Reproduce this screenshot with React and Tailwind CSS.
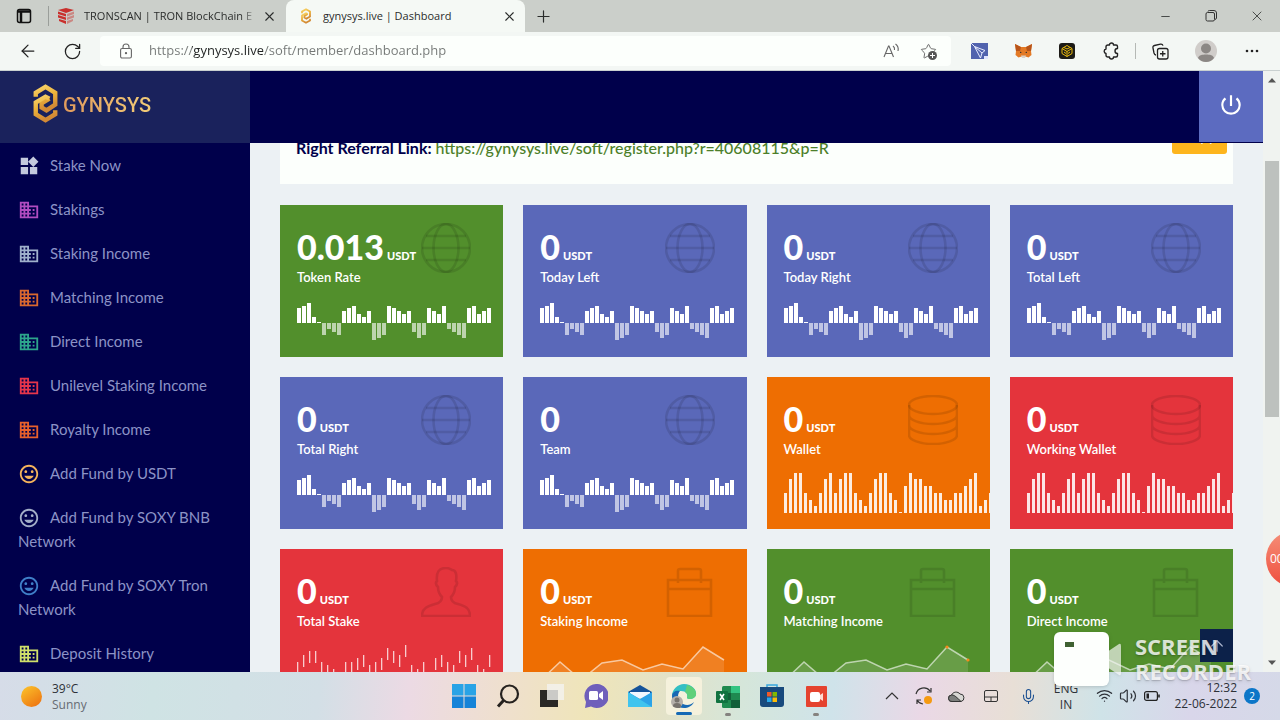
import {
  MdWidgets,
  MdDomain,
  MdMood,
  MdPowerSettingsNew,
} from "react-icons/md";
import {
  ArrowLeft,
  RotateCw,
  X,
  Plus,
  Minus,
  ArrowUp,
  Wifi,
  Volume2,
  Mic,
  Star,
} from "lucide-react";

// DATA
const menu = [
  { label: "Stake Now", icon: MdWidgets, color: "text-[#c3c9dd]" },
  { label: "Stakings", icon: MdDomain, color: "text-[#b14cc0]" },
  { label: "Staking Income", icon: MdDomain, color: "text-[#9fb0cc]" },
  { label: "Matching Income", icon: MdDomain, color: "text-[#d9682f]" },
  { label: "Direct Income", icon: MdDomain, color: "text-[#2da58c]" },
  { label: "Unilevel Staking Income", icon: MdDomain, color: "text-[#e5354b]" },
  { label: "Royalty Income", icon: MdDomain, color: "text-[#e8602c]" },
  { label: "Add Fund by USDT", icon: MdMood, color: "text-[#f5b35c]" },
  { label: "Add Fund by SOXY BNB Network", icon: MdMood, color: "text-[#a3aec8]" },
  { label: "Add Fund by SOXY Tron Network", icon: MdMood, color: "text-[#3f7fc8]" },
  { label: "Deposit History", icon: MdDomain, color: "text-[#cfe06a]" },
];

const cards = [
  { label: "Token Rate", value: "0.013", color: "bg-[#528f2c]", icon: "globe", chart: "wave" },
  { label: "Today Left", value: "0", color: "bg-[#5a68b9]", icon: "globe", chart: "wave" },
  { label: "Today Right", value: "0", color: "bg-[#5a68b9]", icon: "globe", chart: "wave" },
  { label: "Total Left", value: "0", color: "bg-[#5a68b9]", icon: "globe", chart: "wave" },
  { label: "Total Right", value: "0", color: "bg-[#5a68b9]", icon: "globe", chart: "wave" },
  { label: "Team", value: "0", noUnit: true, color: "bg-[#5a68b9]", icon: "globe", chart: "wave" },
  { label: "Wallet", value: "0", color: "bg-[#ee6e02]", icon: "coins", chart: "bars" },
  { label: "Working Wallet", value: "0", color: "bg-[#e4343c]", icon: "coins", chart: "bars" },
  { label: "Total Stake", value: "0", color: "bg-[#e4343c]", icon: "user", chart: "ticks" },
  { label: "Staking Income", value: "0", color: "bg-[#ee6e02]", icon: "bag", chart: "line" },
  { label: "Matching Income", value: "0", color: "bg-[#528f2c]", icon: "bag", chart: "line", dots: true },
  { label: "Direct Income", value: "0", color: "bg-[#528f2c]", icon: "bag", chart: "line" },
];

const waveData = [
  5, 6, 7, 2, 0, -4, -2, -3, -4, 4, 5, 6, 3, 2, 4, -6, -5, -4, 6, 5, 4, 3, 4,
  -3, -5, -4, 5, 4, 3, 6, -2, -3, -4, -5, 5, 6, 3, 4, 5,
];

const barData = [
  3, 5, 6, 6, 3, 2, 1, 3, 5, 6, 3, 5, 6, 6, 3, 2, 1, 3, 5, 6, 6, 3, 2, 0, 4, 6,
  5, 5, 4, 4, 3, 3, 2, 2, 3, 3, 4, 5, 6, 1, 2, 3,
];

const tickData = [
  18, 11, 7, 7, 18, 21, 25, 31, 18, 18, 14, 11, 21, 18, 14, 4, 7, 11, 1, 21, 25,
  18, 31, 14, 11, 18, 21, 7, 11, 4, 21, 25, 11,
];

// CARD CHARTS
function WaveChart() {
  return (
    <svg width="195" height="40" className="block">
      {waveData.map((v, i) => {
        const h = Math.max(1, Math.round(Math.abs(v) * 2.9));
        return (
          <rect
            key={i}
            x={i * 5}
            y={v < 0 ? 23 : 23 - h}
            width="4"
            height={h}
            fill="#fff"
            opacity={v < 0 ? 0.62 : 1}
          />
        );
      })}
    </svg>
  );
}

function BarChart() {
  return (
    <svg width="210" height="41" className="block">
      {barData.map((v, i) => {
        const h = Math.max(1, Math.round(v * 6.7));
        return (
          <rect
            key={i}
            x={i * 5}
            y={41 - h}
            width="3"
            height={h}
            fill="#fff"
            opacity="0.88"
          />
        );
      })}
    </svg>
  );
}

function TickChart() {
  return (
    <svg width="200" height="46" className="block">
      {tickData.map((y, i) => (
        <rect key={i} x={i * 6} y={y} width="1.3" height="12" fill="#fff" opacity="0.75" />
      ))}
    </svg>
  );
}

function LineChart({ dots }) {
  return (
    <svg width="195" height="40" className="block">
      <path d="M0 37 20 18 41 36 62 19 82 16 103 26 122 20 143 25 163 3 184 16V40H0Z" fill="#fff" opacity="0.13" />
      <path
        d="M0 37 20 18 41 36 62 19 82 16 103 26 122 20 143 25 163 3 184 16"
        fill="none"
        stroke="#fff"
        strokeOpacity="0.6"
        strokeWidth="1.5"
      />
      {dots && (
        <g fill="#f78a1d">
          <circle cx="163" cy="3" r="1.6" />
          <circle cx="184" cy="16" r="1.6" />
        </g>
      )}
    </svg>
  );
}

const charts = {
  wave: WaveChart,
  bars: BarChart,
  ticks: TickChart,
  line: LineChart,
};

const iconShapes = {
  globe: (
    <>
      <circle cx="25" cy="25" r="24" />
      <ellipse cx="25" cy="25" rx="12.5" ry="24" />
      <path d="M1 25h48M5 13h40M5 37h40" />
    </>
  ),
  coins: (
    <>
      <ellipse cx="25" cy="10" rx="24" ry="9" />
      <path d="M1 10v30c0 5 11 9 24 9s24-4 24-9V10M1 20c0 5 11 9 24 9s24-4 24-9M1 30c0 5 11 9 24 9s24-4 24-9" />
    </>
  ),
  user: (
    <path d="M1 49c0-8 6-10 13-12 5-1 7-3 7-7-3-3-4-6-4-10-3-3-2-5-1-6-1-9 2-13 9-13 3 0 4 1 6 2 4 0 5 5 4 11 1 1 2 3-1 6 0 4-1 7-4 10 0 4 2 6 7 7 7 2 12 4 12 12Z" />
  ),
  bag: (
    <path d="M3 13h43v36H3ZM3 22h43M13 16V4q0-2 2-2h19q2 0 2 2v12" />
  ),
};

function StatCard({ card }) {
  const Chart = charts[card.chart];

  return (
    <div className={`h-[152px] overflow-hidden p-[17px] text-white ${card.color}`}>
      <div className="flex h-[78px] justify-between whitespace-nowrap">
        <div className="pt-1">
          <p className="text-[34px] leading-[41px] font-black">
            {card.value}
            {!card.noUnit && (
              <small className="ml-[3px] text-[11px] leading-none font-black">USDT</small>
            )}
          </p>
          <p className="text-[13px] leading-5 font-semibold">{card.label}</p>
        </div>
        <svg
          viewBox="0 0 50 50"
          className="mt-px mr-[15px] h-[50px] w-[50px] shrink-0"
          fill="none"
          stroke="#000"
          strokeOpacity="0.11"
          strokeWidth="2.6"
        >
          {iconShapes[card.icon]}
        </svg>
      </div>
      <Chart dots={card.dots} />
    </div>
  );
}

// BROWSER
function TabBar() {
  return (
    <div className="flex h-8 shrink-0 items-stretch bg-[#cbcfca] text-[11px] text-[#2b2d2c]">
      <button aria-label="Tab actions" className="flex w-12 items-center justify-center">
        <svg width="16" height="16" viewBox="0 0 16 16" fill="none" stroke="#111" strokeWidth="1.5">
          <rect x="1.5" y="1.5" width="13" height="13" rx="2" />
          <path d="M2 3.5h12M5 4v10" strokeWidth="2.5" />
        </svg>
      </button>
      <div className="flex w-[238px] items-center">
        <span className="h-5 w-px bg-[#9a9e9a]" />
        <svg width="17" height="16" viewBox="0 0 17 16" className="mx-[9px]" fill="#c9302c">
          <path d="M0 2 8 0l8 2-8 3Z" />
          <path d="M0 3.5 8 6v2.5L0 6ZM0 7l8 2.500V12L0 9.500ZM1 11l7 2v3L1 13Z" />
          <path d="M9 6l7-2.500V6L9 8.500ZM9 9.500 16 7v2.500L9 12ZM9 13l6-2v2l-6 3Z" opacity="0.45" />
        </svg>
        <span className="w-[174px] overflow-hidden mask-r-from-90% whitespace-nowrap">
          TRONSCAN | TRON BlockChain E
        </span>
        <button aria-label="Close tab" className="ml-1">
          <X size={15} strokeWidth={1.8} />
        </button>
      </div>
      <div className="flex w-[239px] items-center rounded-t-lg bg-[#f5f9f5] pl-3">
        <CoinMark className="mr-[9px] h-4 w-4" />
        <span className="flex-1 whitespace-nowrap">gynysys.live | Dashboard</span>
        <button aria-label="Close tab" className="mr-2">
          <X size={15} strokeWidth={1.8} />
        </button>
      </div>
      <button aria-label="New tab" className="flex w-9 items-center justify-center">
        <Plus size={19} strokeWidth={1.5} />
      </button>
      <div className="ml-auto flex">
        <button aria-label="Minimize" className="flex w-[46px] items-center justify-center">
          <Minus size={13} strokeWidth={1.5} />
        </button>
        <button aria-label="Restore" className="flex w-[46px] items-center justify-center">
          <svg width="12" height="12" viewBox="0 0 12 12" fill="none" stroke="#333">
            <rect x="1" y="2.5" width="8.5" height="8.5" rx="1.5" />
            <path d="M3 1.500q0-1 1.500-1h4.500q2.500 0 2.500 2.500v5q0 1-1.500 1.500" />
          </svg>
        </button>
        <button aria-label="Close" className="flex w-[46px] items-center justify-center">
          <X size={16} strokeWidth={1.2} />
        </button>
      </div>
    </div>
  );
}

function CoinMark({ className }) {
  return (
    <svg viewBox="0 0 26 40" className={className} fill="none" strokeWidth="4.5">
      <defs>
        <linearGradient id="gold" x1="0" y1="0" x2="0.3" y2="1">
          <stop offset="0" stopColor="#f7d26a" />
          <stop offset="0.5" stopColor="#edb33a" />
          <stop offset="1" stopColor="#d38a35" />
        </linearGradient>
      </defs>
      <path d="M3 13V9l10-6 10 6v12l-9 6-5-3v-4l8-5" stroke="url(#gold)" />
      <path d="M17 15l-4-2-10 6v12l10 6 10-6v-4" stroke="url(#gold)" />
    </svg>
  );
}

function Toolbar() {
  return (
    <div className="flex h-[39px] shrink-0 items-center border-b border-[#c9d0d0] bg-[#f3f7f4] text-[#222]">
      <button aria-label="Back" className="ml-[18px] flex w-5 justify-center">
        <ArrowLeft size={20} strokeWidth={1.5} />
      </button>
      <button aria-label="Refresh" className="ml-6 flex w-5 justify-center">
        <RotateCw size={19} strokeWidth={1.6} />
      </button>
      <div className="ml-[18px] flex h-[30px] flex-1 items-center rounded bg-[#fcfffc] pl-5">
        <svg width="12" height="16" viewBox="0 0 12 16" fill="none" stroke="#666" strokeWidth="1.1">
          <rect x="0.6" y="5.5" width="10.8" height="9.5" rx="1.5" />
          <path d="M3 5.500V4a3 3 0 0 1 6 0v1.500" />
          <circle cx="6" cy="10.2" r="0.6" fill="#666" />
        </svg>
        <input
          aria-label="Address"
          defaultValue="https://gynysys.live/soft/member/dashboard.php"
          className="ml-[17px] min-w-0 flex-1 bg-[linear-gradient(90deg,#747876_43px,#1f2221_43px,#1f2221_114px,#747876_114px)] bg-clip-text text-[13px] text-transparent caret-black outline-none"
        />
        <button aria-label="Read aloud" className="mr-5">
          <svg width="17" height="16" viewBox="0 0 17 16" fill="none" stroke="#666" strokeWidth="1.1">
            <path d="M1 14 5.500 3h.500L10.500 14M2.700 10.500h6.200M10 3q2 1.500 1.500 4M12.500 1q3.500 2.500 2.500 7" />
          </svg>
        </button>
        <button aria-label="Add to favorites" className="relative mr-[14px]">
          <Star size={17} strokeWidth={1.2} color="#555" />
          <svg width="9" height="9" viewBox="0 0 9 9" className="absolute right-0 bottom-0">
            <circle cx="4.5" cy="4.5" r="4.5" fill="#555" />
            <path d="M4.500 2v5M2 4.500h5" stroke="#fff" />
          </svg>
        </button>
      </div>
      <div className="flex items-center pl-[6px]">
        <button aria-label="Wallet extension" className="flex w-11 justify-center">
          <svg width="17" height="16" viewBox="0 0 17 16">
            <rect width="17" height="16" fill="#5163ae" />
            <path d="M3.500 3.500 14 7.500l-3 2.500-1.500 5ZM3.500 3.500 11 10M0 0l3.500 3.500" fill="none" stroke="#e8ecff" />
            <path d="M13 13h4v3h-4Z" fill="#dfe4ff" />
          </svg>
        </button>
        <button aria-label="Fox extension" className="flex w-11 justify-center">
          <svg width="17" height="16" viewBox="0 0 17 16">
            <path d="M0 1l6 3h5l6-3-1 7 .500 4-3 2.500-3-1-1 1h-2l-1-1-3 1L.500 12 1 8Z" fill="#e37a25" />
            <path d="M0 1l6 3-1 4H1ZM17 1l-6 3 1 4h4Z" fill="#b85419" />
            <path d="M6 12.500h5l-1 2.500H7Z" fill="#dcd0c4" />
            <path d="M5 8.500l2 1.500H5ZM12 8.500 10 10h2Z" fill="#333" />
          </svg>
        </button>
        <button aria-label="BNB extension" className="flex w-11 justify-center">
          <svg width="16" height="16" viewBox="0 0 16 16" fill="none" stroke="#e8b90c">
            <rect width="16" height="16" rx="3" fill="#1c1b17" stroke="none" />
            <path d="M8 2.500l5 3v5l-5 3-5-3v-5ZM3 5.500l5 3 5-3M8 8.500v5M5 4.500l3 1.500 3-1.500M5 9l2 1.500M11 9l-2 1.500" />
          </svg>
        </button>
        <button aria-label="Extensions" className="flex w-11 justify-center">
          <svg width="17" height="18" viewBox="0 0 17 18" fill="none" stroke="#222" strokeWidth="1.4" strokeLinejoin="round">
            <path d="M3 5q0-2 2-2h1.500a2 2 0 0 1 4 0H13q1.500 0 1.500 1.500V6.500a2.500 2.500 0 0 0 0 5V13.500q0 1.500-1.500 1.500H10.500a2 2 0 0 1-4 0H5q-2 0-2-2V11.500a2.300 2.300 0 0 1 0-4.500Z" />
          </svg>
        </button>
        <span className="mx-0.5 h-4 w-px bg-[#b5b9b5]" />
        <button aria-label="Collections" className="flex w-11 justify-center">
          <svg width="17" height="17" viewBox="0 0 17 17" fill="none" stroke="#222" strokeWidth="1.3">
            <rect x="5.5" y="5.5" width="10.5" height="10.5" rx="2" />
            <path d="M10.750 8v5.500M8 10.750h5.500M4 12Q2.500 12 2 10L1 5q-.500-2 1.500-2.500l6-1.400q2-.300 2.500 1.500" />
          </svg>
        </button>
        <button aria-label="Profile" className="flex w-12 justify-center">
          <svg width="22" height="22" viewBox="0 0 22 22">
            <circle cx="11" cy="11" r="11" fill="#d0cdca" />
            <circle cx="11" cy="8.5" r="5" fill="#8b8784" />
            <path d="M3 18c1-3 4-3.500 8-3.500s7 .500 8 3.500q-3 4-8 4t-8-4Z" fill="#8b8784" />
          </svg>
        </button>
        <button aria-label="More" className="mr-[6px] flex w-11 justify-center">
          <svg width="14" height="4" viewBox="0 0 14 4" fill="#222">
            <circle cx="2" cy="2" r="1.3" />
            <circle cx="7" cy="2" r="1.3" />
            <circle cx="12" cy="2" r="1.3" />
          </svg>
        </button>
      </div>
    </div>
  );
}

// WEB PAGE
function Header() {
  return (
    <header className="flex h-[72px] shrink-0 bg-[#00004b]">
      <a href="#home" className="flex w-[250px] items-center bg-[#1a225c] pb-2 pl-8">
        <CoinMark className="h-[39px] w-[27px]" />
        <span className="mt-1 ml-1 bg-linear-to-r from-[#e09a5c] to-[#f2cc78] bg-clip-text font-[Roboto,sans-serif] text-[20px] leading-6 font-medium text-transparent">
          GYNYSYS
        </span>
      </a>
      <button
        aria-label="Log out"
        className="mb-px ml-auto flex w-16 items-center justify-center bg-[#5c6bc0] pb-1 text-white"
      >
        <MdPowerSettingsNew size={26} />
      </button>
    </header>
  );
}

function Sidebar() {
  return (
    <nav className="w-[250px] shrink-0 overflow-hidden bg-[#00004b]">
      {menu.map((item) => (
        <a
          key={item.label}
          href="#menu"
          className="block py-[10px] pr-9 pl-[18px] text-[15px] leading-6 text-[#8c93c6]"
        >
          <item.icon size={22} className={`mt-0.5 mr-[10px] inline align-top ${item.color}`} />
          {item.label}
        </a>
      ))}
    </nav>
  );
}

function ReferralPanel() {
  return (
    <section className="flex h-[41px] items-end overflow-hidden bg-[#fcfffc] pr-[6px] pl-4">
      <p className="flex-1 pb-6 text-[16px] leading-6 font-bold whitespace-nowrap text-[#00004b]">
        Right Referral Link:{" "}
        <a href="#referral" className="font-medium text-[#4c7f2a]">
          https://gynysys.live/soft/register.php?r=40608115&amp;p=R
        </a>
      </p>
      <button className="mb-[30px] h-[34px] w-[55px] rounded-[3px] bg-[#fdb51d] text-sm text-white">
        Copy
      </button>
    </section>
  );
}

function Scrollbar() {
  return (
    <div className="flex w-[17px] shrink-0 flex-col items-center bg-[#f0f3f0] py-[6px]">
      <svg width="8" height="6" viewBox="0 0 8 6" fill="#555">
        <path d="M0 5.500 4 1l4 4.500Z" />
      </svg>
      <div className="mt-[78px] h-[256px] w-[14px] bg-[#bdc1be]" />
      <svg width="8" height="6" viewBox="0 0 8 6" fill="#555" className="mt-auto">
        <path d="M0 .500 4 5l4-4.500Z" />
      </svg>
    </div>
  );
}

// SCREEN RECORDER OVERLAY
function RecorderOverlay() {
  return (
    <>
      <div className="absolute right-[29px] bottom-8 z-10 flex items-center">
        <svg width="70" height="58" viewBox="0 0 70 58" className="drop-shadow">
          <path d="M54 22 66 14q2-1 2 2v27q0 3-2 2L54 37Z" fill="#fff" opacity="0.65" />
          <rect x="1" y="2" width="55" height="54" rx="6" fill="#fdfffd" />
          <rect x="12" y="12" width="9" height="5" fill="#3f6132" />
        </svg>
        <p className="ml-3 text-[22px] leading-[25px] font-bold text-white/80 text-shadow-md">
          SCREEN
          <br />
          RECORDER
        </p>
      </div>
      <div className="absolute top-[531px] -right-[42px] z-10 flex h-14 w-14 items-center rounded-full bg-linear-to-b from-[#f58e78] to-[#ee4b3c] pl-1 text-xs text-white">
        00
      </div>
    </>
  );
}

// TASKBAR
function Taskbar() {
  return (
    <footer className="grid h-12 shrink-0 grid-cols-[1fr_auto_1fr] items-center bg-[linear-gradient(95deg,#d6dce8_0%,#cfe3e4_12%,#d3dfe6_25%,#ecdae4_32%,#efe0cc_40%,#efe5b9_46%,#e3e2c8_52%,#d5e6da_58%,#cfe3ea_65%,#ead8e6_72%,#e8dfd6_79%,#cfe3e8_86%,#d9d6ea_93%,#d5d9e8_100%)] text-xs leading-4 text-[#2d3138]">
      <div className="flex items-center pl-[21px]">
        <svg width="21" height="21" viewBox="0 0 21 21">
          <defs>
            <linearGradient id="sun" x1="0" y1="0" x2="0.7" y2="1">
              <stop offset="0" stopColor="#fcc62c" />
              <stop offset="1" stopColor="#ee7712" />
            </linearGradient>
          </defs>
          <circle cx="10.5" cy="10.5" r="10.5" fill="url(#sun)" />
        </svg>
        <div className="ml-[10px] pt-0.5">
          <p>39°C</p>
          <p className="text-[#666b73]">Sunny</p>
        </div>
      </div>

      <div className="flex h-full">
        <button aria-label="Start" className="flex w-11 items-center justify-center">
          <svg width="24" height="24" viewBox="0 0 24 24" fill="#1583d8">
            <path d="M0 0h11.500v11.500H0ZM12.500 0H24v11.500H12.500Z" fill="#29a3e6" />
            <path d="M0 12.500h11.500V24H0ZM12.500 12.500H24V24H12.500Z" />
          </svg>
        </button>
        <button aria-label="Search" className="flex w-11 items-center justify-center">
          <svg width="24" height="24" viewBox="0 0 24 24" fill="none" stroke="#26221f" strokeWidth="2.2">
            <circle cx="13.5" cy="10" r="8.5" />
            <path d="M7.500 16.500 2 22.500" strokeWidth="3" />
          </svg>
        </button>
        <button aria-label="Task view" className="flex w-11 items-center justify-center">
          <svg width="24" height="24" viewBox="0 0 24 24">
            <path d="M0 6h18v17H0Z" fill="#2a2826" />
            <path d="M7 0h17v16H7Z" fill="#f4f3f0" opacity="0.8" />
          </svg>
        </button>
        <button aria-label="Chat" className="flex w-11 items-center justify-center">
          <svg width="24" height="24" viewBox="0 0 24 24">
            <path d="M12 0a12 12 0 1 1-5 22.500L1 24l1-6A12 12 0 0 1 12 0Z" fill="#6f5fbb" />
            <rect x="5" y="7" width="9" height="9" rx="1.5" fill="#fff" />
            <path d="M15 10l4-3v9l-4-3Z" fill="#fff" />
          </svg>
        </button>
        <button aria-label="Mail" className="flex w-11 items-center justify-center">
          <svg width="24" height="22" viewBox="0 0 24 22">
            <path d="M0 7 12 0l12 7v5H0Z" fill="#15539a" />
            <path d="M2 7h20v6H2Z" fill="#f2f8ff" />
            <path d="M0 7l12 7 12-7v15H0Z" fill="#2ca3e8" />
            <path d="M0 7l24 15H0Z" fill="#40c4ee" />
          </svg>
        </button>
        <button
          aria-label="Edge"
          className="my-[5px] mr-1 ml-1 flex w-9 flex-col items-center justify-between rounded bg-[#f5f1dc] pt-[7px]"
        >
          <svg width="26" height="24" viewBox="0 0 26 24">
            <path d="M1 12C1 5 7 0 13 0c8 0 13 6 12 11-1 4-7 5-9 3 1-4-1-7-6-7-4 0-8 2-9 5Z" fill="#34bfc4" />
            <path d="M16 1c6 1 10 6 9 10-1 4-7 5-9 3 1-3 0-5-2-6Z" fill="#5fd07a" />
            <path d="M1 12c0-4 4-6 8-5-3 3-3 10 3 13 4 2 8 1 11-2-2 4-6 6-10 6C6 24 1 19 1 12Z" fill="#1668b4" />
            <circle cx="6" cy="18" r="6" fill="#b5b0aa" />
            <circle cx="6" cy="16" r="2.5" fill="#77726c" />
            <path d="M2 22q0-3 4-3t4 3-4 2-4-2Z" fill="#77726c" />
          </svg>
          <span className="h-[3px] w-4 rounded-full bg-[#1569b5]" />
        </button>
        <button aria-label="Excel" className="flex w-11 flex-col items-center justify-between pt-[14px] pb-1">
          <svg width="24" height="22" viewBox="0 0 24 22">
            <rect x="6" width="18" height="22" rx="1.5" fill="#1f8a50" />
            <path d="M15 0h9v7h-9Z" fill="#33c481" />
            <path d="M6 7h9v7H6ZM15 14h9v8h-9Z" fill="#12603a" />
            <rect y="5" width="12" height="12" rx="1" fill="#107240" />
            <path d="M4 8l4 6M8 8l-4 6" stroke="#fff" strokeWidth="1.6" />
          </svg>
          <span className="h-[3px] w-[6px] rounded-full bg-[#85827f]" />
        </button>
        <button aria-label="Store" className="flex w-11 items-center justify-center">
          <svg width="24" height="24" viewBox="0 0 24 24">
            <path d="M7 4V1h10v3" fill="none" stroke="#38a7dd" strokeWidth="1.5" />
            <path d="M0 3h24v17q0 3-3 3H3q-3 0-3-3Z" fill="#184a7d" />
            <path d="M7 8h4.500v4.500H7Z" fill="#f05a28" />
            <path d="M12.500 8H17v4.500h-4.500Z" fill="#7fba00" />
            <path d="M7 13.500h4.500V18H7Z" fill="#28a8ea" />
            <path d="M12.500 13.500H17V18h-4.500Z" fill="#fbbc09" />
          </svg>
        </button>
        <button aria-label="Recorder" className="flex w-11 flex-col items-center justify-between pt-[14px] pb-1">
          <svg width="21" height="21" viewBox="0 0 21 21">
            <rect width="21" height="21" rx="1" fill="#e5432f" />
            <rect x="4" y="6" width="10" height="10" rx="2" fill="#fff" />
            <path d="M14 9l3-2v8l-3-2Z" fill="#ffd9d0" />
          </svg>
          <span className="h-[3px] w-[6px] rounded-full bg-[#85827f]" />
        </button>
      </div>

      <div className="flex items-center justify-end pr-5">
        <button aria-label="Hidden icons" className="flex w-8 justify-center">
          <svg width="14" height="8" viewBox="0 0 14 8" fill="none" stroke="#333" strokeWidth="1.2">
            <path d="M1 7l6-6 6 6" />
          </svg>
        </button>
        <button aria-label="Update" className="flex w-8 justify-center">
          <svg width="18" height="18" viewBox="0 0 18 18" fill="none" stroke="#333" strokeWidth="1.2">
            <path d="M1 7a8 8 0 0 1 14-3M16 1v4h-4M2 17v-4h4M2 13a8 8 0 0 0 6 4" />
            <circle cx="13" cy="13" r="4" fill="#f59a12" stroke="none" />
          </svg>
        </button>
        <button aria-label="OneDrive" className="flex w-8 justify-center">
          <svg width="17" height="12" viewBox="0 0 17 12" stroke="#333">
            <path d="M4 11.500a3.200 3.200 0 0 1-.500-6.400A5 5 0 0 1 12 4a3.800 3.800 0 0 1 1 7.500Z" fill="#d8d8d4" />
            <path d="M4 11.500a3.200 3.200 0 0 1-.500-6.400Q6 4 13 11.500Z" fill="#7d7f7d" />
          </svg>
        </button>
        <button aria-label="Touchpad" className="flex w-[38px] justify-center">
          <svg width="14" height="12" viewBox="0 0 14 12" fill="none" stroke="#333">
            <rect x="0.5" y="0.5" width="13" height="11" rx="1.5" />
            <path d="M.500 7h13M7 7v4.500" />
          </svg>
        </button>
        <button aria-label="Microphone" className="flex w-9 justify-center">
          <Mic size={17} strokeWidth={1.5} color="#1b4f91" />
        </button>
        <button className="w-10 pt-0.5 text-center">
          ENG
          <br />
          IN
        </button>
        <button aria-label="Network and sound" className="ml-[6px] flex">
          <span className="flex w-6 justify-center">
            <Wifi size={17} strokeWidth={1.8} />
          </span>
          <span className="flex w-6 justify-center">
            <Volume2 size={18} strokeWidth={1.6} />
          </span>
          <span className="flex w-6 items-center justify-center">
            <svg width="16" height="10" viewBox="0 0 16 10" fill="none" stroke="#222" strokeWidth="1.2">
              <rect x="0.6" y="0.6" width="12.8" height="8.8" rx="2" />
              <path d="M2.500 2.500H5v5H2.500Z" fill="#222" stroke="none" />
              <path d="M15 3.500v3" strokeWidth="1.6" />
            </svg>
          </span>
        </button>
        <div className="w-[73px] text-right">
          <p>12:32</p>
          <p>22-06-2022</p>
        </div>
        <span className="ml-[7px] flex h-4 w-4 items-center justify-center rounded-full bg-[#0c76c8] text-[10px] text-white">
          2
        </span>
      </div>
    </footer>
  );
}

export default function App() {
  return (
    <div className="relative flex h-screen flex-col overflow-hidden font-['Open_Sans',sans-serif]">
      <TabBar />
      <Toolbar />

      <div className="relative flex min-h-0 flex-1">
        <div className="flex min-w-0 flex-1 flex-col">
          <Header />
          <div className="flex min-h-0 flex-1 font-[Lato,sans-serif]">
            <Sidebar />
            <main className="min-w-0 flex-1 overflow-hidden bg-[#ecf1f4] px-[30px]">
              <ReferralPanel />
              <div className="mt-[21px] grid grid-cols-4 gap-5">
                {cards.map((card) => (
                  <StatCard key={card.label} card={card} />
                ))}
              </div>
            </main>
          </div>
        </div>
        <button
          aria-label="Back to top"
          className="absolute right-[47px] bottom-[10px] flex h-[33px] w-[33px] items-center justify-center bg-[#0c2149] text-[#aab4cc]"
        >
          <ArrowUp size={18} strokeWidth={1.6} />
        </button>
        <Scrollbar />
      </div>

      <Taskbar />
      <RecorderOverlay />
    </div>
  );
}
